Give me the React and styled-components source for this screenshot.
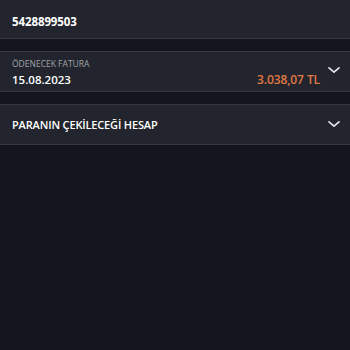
import React from "react";
import styled, { createGlobalStyle } from "styled-components";

const GlobalStyle = createGlobalStyle`
  body {
    margin: 0;
    background: #14151c;
    font-family: "Open Sans", "Noto Sans", sans-serif;
  }
`;

function Chevron() {
  return (
    <svg width="12" height="8" viewBox="0 0 12 8" fill="none">
      <path d="M1 1.8 L6 6.2 L11 1.8" stroke="#e8e9ec" strokeWidth="1.6" strokeLinecap="round" strokeLinejoin="round" />
    </svg>
  );
}

export default function App() {
  return (
    <>
      <GlobalStyle />
      <Page>
        <Card height={39} top={false}>
          <Number>5428899503</Number>
        </Card>

        <Card height={41}>
          <Body>
            <Label>ÖDENECEK FATURA</Label>
            <Row>
              <Value>15.08.2023</Value>
              <Amount>3.038,07 TL</Amount>
            </Row>
          </Body>
          <ChevronBox offset={-2}>
            <Chevron />
          </ChevronBox>
        </Card>

        <Card height={41}>
          <Title>PARANIN ÇEKİLECEĞİ HESAP</Title>
          <ChevronBox offset={-1}>
            <Chevron />
          </ChevronBox>
        </Card>
      </Page>
    </>
  );
}

const Page = styled.div`
  display: flex;
  flex-direction: column;
  gap: 12px;
  min-height: 350px;
  background: #14151c;
`;

const Card = styled.div`
  box-sizing: border-box;
  height: ${(p) => p.height}px;
  display: flex;
  align-items: center;
  padding: 0 10px 0 12px;
  background: #22252d;
  border-top: ${(p) => (p.top === false ? "none" : "1px solid #353842")};
  border-bottom: 1px solid #353842;
`;

const Number = styled.div`
  color: #ffffff;
  font-size: 11.5px;
  font-weight: 700;
  letter-spacing: -0.1px;
  padding-top: 5px;
`;

const Body = styled.div`
  flex: 1;
  display: flex;
  flex-direction: column;
  gap: 3px;
  padding-top: 3px;
`;

const Label = styled.div`
  color: #a2a4ab;
  font-size: 8.5px;
  line-height: 11px;
  font-weight: 500;
`;

const Row = styled.div`
  display: flex;
  justify-content: space-between;
  align-items: center;
  line-height: 16px;
`;

const Value = styled.div`
  color: #ffffff;
  font-size: 11.5px;
  font-weight: 600;
`;

const Amount = styled.div`
  color: #e07845;
  font-size: 12px;
  font-weight: 600;
  letter-spacing: -0.1px;
`;

const Title = styled.div`
  flex: 1;
  color: #ffffff;
  font-size: 11px;
  font-weight: 600;
  letter-spacing: -0.15px;
`;

const ChevronBox = styled.div`
  display: flex;
  margin-left: 8px;
  transform: translateY(${(p) => p.offset || 0}px);
`;
